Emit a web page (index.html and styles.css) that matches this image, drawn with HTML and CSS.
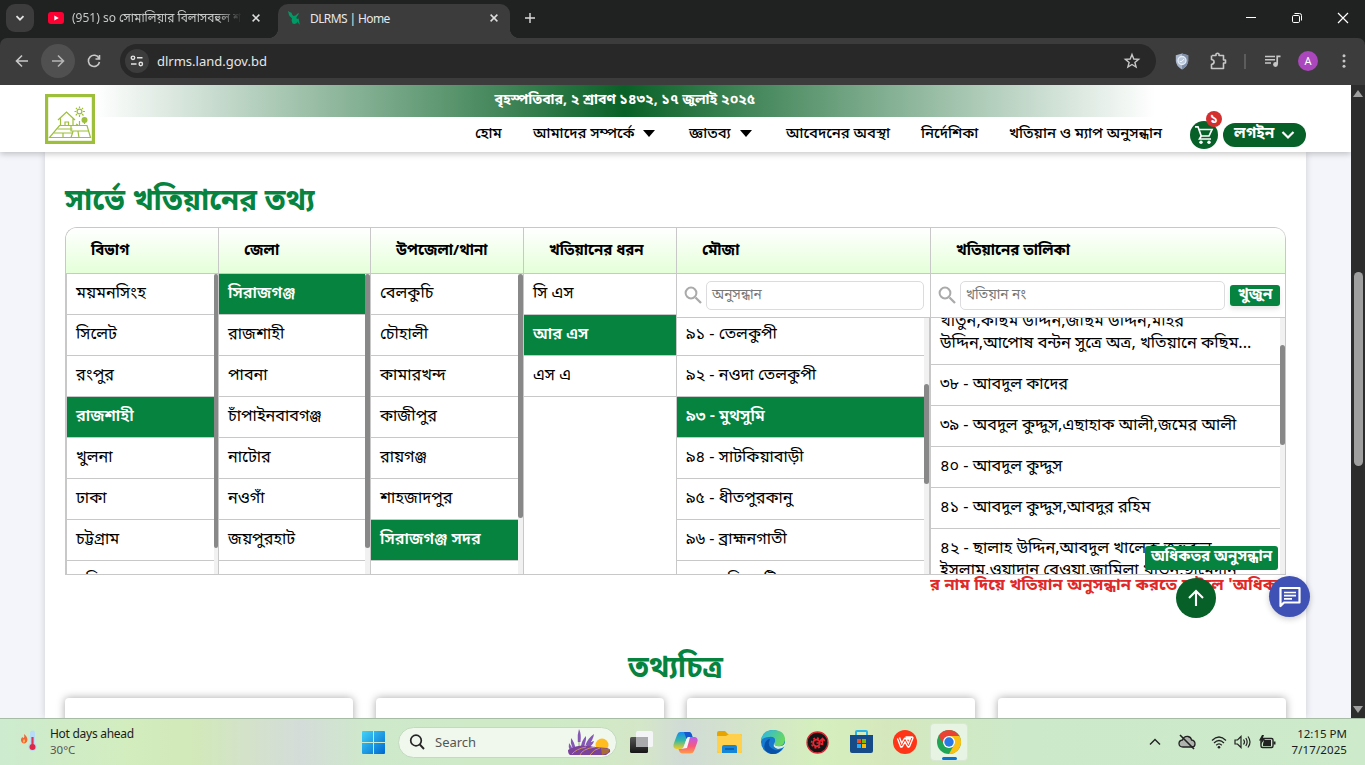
FILE: index.html
```html
<!DOCTYPE html>
<html lang="bn">
<head>
<meta charset="utf-8">
<title>DLRMS | Home</title>
<link rel="stylesheet" href="styles.css">
</head>
<body>
<div class="window">
  <div class="tabstrip">
    <div class="tab-search"><svg width="12" height="12" viewBox="0 0 12 12"><path d="M2.500 4.200 6 7.700 9.500 4.200" fill="none" stroke="#e3e3e3" stroke-width="1.800"/></svg></div>
    <div class="tab tab-back">
      <svg width="16" height="12" viewBox="0 0 16 12"><rect width="16" height="12" rx="3" fill="#ff0033"/><path d="M6.300 3.400 10.800 6 6.300 8.600z" fill="#fff"/></svg>
      <span class="tab-title faded">(951) so সোমালিয়ার বিলাসবহুল শ</span>
      <svg class="tab-x" width="8" height="8" viewBox="0 0 8 8"><path d="M.6.600 7.400 7.400M7.400.600.600 7.400" stroke="#dedede" stroke-width="1.500"/></svg>
    </div>
    <div class="tab tab-active">
      <svg width="14" height="14" viewBox="0 0 14 14"><path d="M0 0 2 1.200 3.500 1.800 4.200 3.800 5.500 5 7.500 4.500 10 2.200 11 2.600 9.200 5.200 8.200 6.600 9 8 10.600 7.600 11.800 13.800 10.500 12.600 9.600 10.600 8.600 12.200 6.500 13 4.500 12.400 3.600 9.500 4 7.200 2 5.600 1 4z" fill="#009a66"/></svg>
      <span class="tab-title title-home">DLRMS | Home</span>
      <svg class="tab-x" width="8" height="8" viewBox="0 0 8 8"><path d="M.6.600 7.400 7.400M7.400.600.600 7.400" stroke="#dedede" stroke-width="1.500"/></svg>
    </div>
    <svg class="new-tab" width="12" height="12" viewBox="0 0 12 12"><path d="M6 1v10M1 6h10" stroke="#dcdcdc" stroke-width="1.400"/></svg>
    <div class="win-controls">
      <svg width="10" height="10" viewBox="0 0 10 10"><path d="M0 4.500h10" stroke="#fff"/></svg>
      <svg width="10" height="10" viewBox="0 0 10 10"><rect x=".5" y="2.500" width="7" height="7" rx="1.200" fill="none" stroke="#fff"/><path d="M2.500.5H7.500Q9.500.5 9.500 2.500V7.500" fill="none" stroke="#fff"/></svg>
      <svg width="10" height="10" viewBox="0 0 10 10"><path d="M0 0 10 10M10 0 0 10" stroke="#fff" stroke-width="1.200"/></svg>
    </div>
  </div>
  <div class="toolbar">
    <div class="tb-btn"><svg width="14" height="14" viewBox="0 0 14 14"><path d="M13 7H2M7 1.500 1.500 7 7 12.500" fill="none" stroke="#c7c7c7" stroke-width="1.600"/></svg></div>
    <div class="tb-btn tb-hover"><svg width="14" height="14" viewBox="0 0 14 14"><path d="M1 7H12M7 1.500 12.500 7 7 12.500" fill="none" stroke="#b5b5b5" stroke-width="1.600"/></svg></div>
    <div class="tb-btn"><svg width="14" height="14" viewBox="0 0 14 14"><path d="M12 4.300A5.600 5.600 0 1 0 12.500 8M12.500 1V5H8.500" fill="none" stroke="#c7c7c7" stroke-width="1.600"/></svg></div>
    <div class="omnibox">
      <div class="site-info"><svg width="14" height="12" viewBox="0 0 14 12"><g fill="none" stroke="#e3e3e3" stroke-width="1.400"><circle cx="3" cy="2.800" r="1.700"/><path d="M7 2.800H12.500M1 9H6.500"/><circle cx="10.800" cy="9" r="1.700"/></g></svg></div>
      <span class="url">dlrms.land.gov.bd</span>
      <svg class="star" width="16" height="16" viewBox="0 0 16 16"><path d="M8 1.500 9.800 6 14.600 6.300 10.900 9.400 12.100 14 8 11.500 3.900 14 5.100 9.400 1.400 6.300 6.200 6z" fill="none" stroke="#c7c7c7" stroke-width="1.400"/></svg>
    </div>
    <div class="tb-right">
      <svg width="14" height="17" viewBox="0 0 14 17"><path d="M7 .5 13.200 2.300V8Q13 13 7 16.500 1 13 .8 8V2.300z" fill="#a9b5ca"/><path d="M7 .5V16.500Q13 13 13.200 8V2.300z" fill="#7f8ea8"/><circle cx="7" cy="7.500" r="4" fill="#b9c8db" stroke="#e4ecf5" stroke-width="1.400"/><path d="M4.800 8.500Q7 9.500 9 6" fill="none" stroke="#f4f8fc"/></svg>
      <svg width="17" height="18" viewBox="0 0 17 18"><path d="M2 3.500H6V2Q7.500.5 9 2V3.500H13.500V8H15.500V11H13.500V16.500H1.500V12.500Q4.500 11.500 4 9.600 4 8 1.500 7.500V3.500" fill="none" stroke="#c7c7c7" stroke-width="1.600" stroke-linejoin="round"/></svg>
      <i class="tb-sep"></i>
      <svg width="16" height="14" viewBox="0 0 16 14"><path d="M0 2.500H10M0 5.800H10M0 9H6" stroke="#c7c7c7" stroke-width="1.500"/><path d="M12.200 10V2.300H15.500" fill="none" stroke="#c7c7c7" stroke-width="1.700"/><circle cx="10.500" cy="10.500" r="2.400" fill="#c7c7c7"/></svg>
      <span class="avatar">A</span>
      <svg width="4" height="14" viewBox="0 0 4 14"><g fill="#c7c7c7"><circle cx="2" cy="1.800" r="1.500"/><circle cx="2" cy="7" r="1.500"/><circle cx="2" cy="12.200" r="1.500"/></g></svg>
    </div>
  </div>

  <div class="viewport">
    <div class="page">
      <header class="site-header">
        <svg class="logo" width="50" height="50" viewBox="0 0 50 50"><rect x="1.600" y="1.600" width="46.800" height="46.800" fill="#fff" stroke="#9dbf3b" stroke-width="3.200"/><g fill="none" stroke="#9dbf3b" stroke-width="1.200"><path d="M13 26 21.500 18 30 26M15.500 24.500V31.500M28 24.500V31.500M20 31V28H23.500V31M14.500 31.500H42L45.500 43.500H4.500z"/><path d="M12.500 35H27.500M26 32V37H43.500M9 39H27M18 39V43.500M28 37.500 26 43.500M33 37.500 34 43.500"/><circle cx="34.500" cy="17.500" r="2.400"/><path d="M34.500 12.500V14M34.500 21V23M29.500 17.500H31.200M38 17.500H40M31 14 32 15M37 20 38.500 21.500M38 14 37 15M32 20 30.800 21.300M39.500 30V26M34.500 31V27M31 30 33 31"/></g><circle cx="39.500" cy="26" r="3" fill="#9dbf3b"/></svg>
        <div class="head-main">
          <div class="date-band"><span class="date-text">বৃহস্পতিবার, ২ শ্রাবণ ১৪৩২, ১৭ জুলাই ২০২৫</span></div>
          <nav class="nav">
            <a class="n1">হোম</a>
            <a class="n2">আমাদের সম্পর্কে<i class="tri"></i></a>
            <a class="n3">জ্ঞাতব্য<i class="tri"></i></a>
            <a class="n4">আবেদনের অবস্থা</a>
            <a class="n5">নির্দেশিকা</a>
            <a class="n6">খতিয়ান ও ম্যাপ অনুসন্ধান</a>
          </nav>
        </div>
        <div class="actions">
          <div class="cart"><svg width="20" height="20" viewBox="0 0 20 20"><path d="M1 1.800H4L7.200 11H15L18 4.500H5M7.200 11 5.500 14H17" fill="none" stroke="#fff" stroke-width="1.700"/><circle cx="7" cy="17.200" r="1.700" fill="#fff"/><circle cx="15" cy="17.200" r="1.700" fill="#fff"/></svg><span class="badge">১</span></div>
          <div class="login"><span>লগইন</span><svg width="14" height="10" viewBox="0 0 14 10"><path d="M1.500 2 7 7.500 12.500 2" fill="none" stroke="#fff" stroke-width="2.200"/></svg></div>
        </div>
      </header>

      <main class="panel">
        <h2 class="title">সার্ভে খতিয়ানের তথ্য</h2>
        <div class="survey">
          <section class="col">
            <div class="col-head">বিভাগ</div>
            <div class="col-body inset"><div class="list">
              <div class="row">ময়মনসিংহ</div><div class="row">সিলেট</div><div class="row">রংপুর</div><div class="row on">রাজশাহী</div><div class="row">খুলনা</div><div class="row">ঢাকা</div><div class="row">চট্টগ্রাম</div><div class="row">বরিশাল</div>
            </div><div class="rail slim"><i class="thumb t-long"></i></div></div>
          </section>
          <section class="col">
            <div class="col-head">জেলা</div>
            <div class="col-body"><div class="list">
              <div class="row on">সিরাজগঞ্জ</div><div class="row">রাজশাহী</div><div class="row">পাবনা</div><div class="row">চাঁপাইনবাবগঞ্জ</div><div class="row">নাটোর</div><div class="row">নওগাঁ</div><div class="row">জয়পুরহাট</div><div class="row"></div>
            </div><div class="rail"><i class="thumb t-long"></i></div></div>
          </section>
          <section class="col">
            <div class="col-head">উপজেলা/থানা</div>
            <div class="col-body"><div class="list">
              <div class="row">বেলকুচি</div><div class="row">চৌহালী</div><div class="row">কামারখন্দ</div><div class="row">কাজীপুর</div><div class="row">রায়গঞ্জ</div><div class="row">শাহজাদপুর</div><div class="row on">সিরাজগঞ্জ সদর</div><div class="row"></div>
            </div><div class="rail"><i class="thumb t-mid"></i></div></div>
          </section>
          <section class="col">
            <div class="col-head">খতিয়ানের ধরন</div>
            <div class="col-body"><div class="list">
              <div class="row">সি এস</div><div class="row on">আর এস</div><div class="row">এস এ</div>
            </div></div>
          </section>
          <section class="col">
            <div class="col-head">মৌজা</div>
            <div class="finder"><svg class="mag" width="19" height="19" viewBox="0 0 19 19"><circle cx="7" cy="7" r="5.400" fill="none" stroke="#aaa" stroke-width="2"/><path d="M11.500 11.500 17 17" stroke="#aaa" stroke-width="2.300"/></svg><div class="field">অনুসন্ধান</div></div>
            <div class="col-body edge"><div class="list up3">
              <div class="row">৯১ - তেলকুপী</div><div class="row">৯২ - নওদা তেলকুপী</div><div class="row on">৯৩ - মুথসুমি</div><div class="row">৯৪ - সাটকিয়াবাড়ী</div><div class="row">৯৫ - ধীতপুরকানু</div><div class="row">৯৬ - ব্রাহ্মনগাতী</div><div class="row">৯৭ - হরিনহাটি</div>
            </div><div class="rail"><i class="thumb t-mouza"></i></div></div>
          </section>
          <section class="col">
            <div class="col-head">খতিয়ানের তালিকা</div>
            <div class="finder"><svg class="mag" width="19" height="19" viewBox="0 0 19 19"><circle cx="7" cy="7" r="5.400" fill="none" stroke="#aaa" stroke-width="2"/><path d="M11.500 11.500 17 17" stroke="#aaa" stroke-width="2.300"/></svg><div class="field">খতিয়ান নং</div><div class="go">খুজুন</div></div>
            <div class="col-body"><div class="list up17">
              <div class="row two">খাতুন,কছিম উদ্দিন,জছিম উদ্দিন,মহির<br>উদ্দিন,আপোষ বন্টন সুত্রে অত্র, খতিয়ানে কছিম...</div>
              <div class="row">৩৮ - আবদুল কাদের</div><div class="row">৩৯ - অবদুল কুদ্দুস,এছাহাক আলী,জমের আলী</div><div class="row">৪০ - আবদুল কুদ্দুস</div><div class="row">৪১ - আবদুল কুদ্দুস,আবদুর রহিম</div>
              <div class="row two last">৪২ - ছালাহ উদ্দিন,আবদুল খালেক,জহুরুল<br>ইসলাম,ওয়াদান বেওয়া,জামিলা খাতুন,ছামেদান</div>
            </div><div class="rail"><i class="thumb t-khatian"></i></div></div>
            <div class="more">অধিকতর অনুসন্ধান</div>
          </section>
        </div>
        <div class="ticker"><span>র নাম দিয়ে খতিয়ান অনুসন্ধান করতে চাইলে 'অধিকতর</span></div>
        <h3 class="subtitle">তথ্যচিত্র</h3>
        <div class="cards"><div class="card"></div><div class="card"></div><div class="card"></div><div class="card"></div></div>
      </main>
      <div class="fab top"><svg width="20" height="20" viewBox="0 0 20 20"><path d="M10 18V3M3 10 10 3 17 10" fill="none" stroke="#fff" stroke-width="2.100"/></svg></div>
      <div class="fab chat"><svg width="22" height="22" viewBox="0 0 22 22"><path d="M1.500 20V2H20.500V16.500H5z" fill="none" stroke="#fff" stroke-width="2.200" stroke-linejoin="round"/><path d="M5 6.500H17M5 9.700H17M5 12.900H13" stroke="#fff" stroke-width="1.700"/></svg></div>
    </div>
    <div class="scrollbar"><i class="arrow up"></i><i class="bar"></i><i class="arrow down"></i></div>
  </div>

  <footer class="taskbar">
    <div class="weather">
      <svg width="18" height="24" viewBox="0 0 18 24"><path d="M4 5Q9 9 6.800 13 4 16 1.500 13 0 10 2.500 8 3 9 3.500 9 4.800 8 4 5z" fill="#f2673a"/><path d="M4 10Q6 12 4 13.700 2 13 4 10z" fill="#ffc04d"/><path d="M10 4Q10 1.500 12.500 1.500 15 1.500 15 4V14Q18 17 16 20.500 12.500 24 9.200 20.500 7 17 10 14z" fill="#b8dcf5"/><path d="M12.500 8V18" stroke="#df3352" stroke-width="2.200"/><circle cx="12.500" cy="18" r="3" fill="#df2647"/></svg>
      <div class="weather-text"><span class="w1">Hot days ahead</span><span class="w2">30°C</span></div>
    </div>
    <div class="apps">
      <div class="app start"><svg width="23" height="23" viewBox="0 0 23 23"><defs><linearGradient id="win" x2="1" y2="1"><stop stop-color="#42d2f8"/><stop offset="1" stop-color="#0068cf"/></linearGradient></defs><path d="M0 1Q0 0 1 0H11V11H0zM12 0H22Q23 0 23 1V11H12zM0 12H11V23H1Q0 23 0 22zM12 12H23V22Q23 23 22 23H12z" fill="url(#win)"/></svg></div>
      <div class="search"><svg width="16" height="16" viewBox="0 0 16 16"><circle cx="7" cy="6.500" r="5.300" fill="none" stroke="#252525" stroke-width="1.700"/><path d="M10.800 10.500 15 15" stroke="#252525" stroke-width="1.900"/></svg><span class="search-label">Search</span>
        <svg class="lavender" width="43" height="26" viewBox="0 0 43 26"><circle cx="34" cy="16" r="6.500" fill="#ffbd22"/><g stroke="#7e9a5b" stroke-width=".8"><path d="M4 12 8 22M11 8 11 22M17 14 12 22M24 10 16 22"/></g><g fill="#8458b4"><path d="M11 0Q13.500 5 12.500 13H9.800Q9 6 11 0zM3 9Q6.500 13 7.500 20L4.500 19Q2 14 3 9zM1 14Q4 17 4.500 22H2Q0 18 1 14zM18 7Q18.500 12 15.500 18L13 17Q14 11 18 7zM26 5Q25.500 10 20 17L17.500 16Q20 9 26 5zM26 12Q25 16 20 19L19 17Q21 13 26 12z"/></g><path d="M0 21Q12 14 26 18L39 19Q43 20 42 23L38 26H2Q0 25 0 21z" fill="#7a429b"/><path d="M33 19 42 20 40 24 34 26z" fill="#a96c37"/><path d="M12 26Q14 20 27 18M22 26Q26 20 32 19M4 25Q8 20 18 18" fill="none" stroke="#ca8f5a"/></svg></div>
      <div class="app"><svg width="24" height="24" viewBox="0 0 24 24"><defs><linearGradient id="tv" y2="1" x2="0"><stop stop-color="#555"/><stop offset="1" stop-color="#151515"/></linearGradient></defs><rect x="1" y="7" width="18" height="16" rx="1.500" fill="url(#tv)"/><rect x="7" y="1" width="17" height="16" rx="1.500" fill="#f4f5f6"/><path d="M7 7H19V17H7z" fill="#a9aaab"/></svg></div>
      <div class="app"><svg width="25" height="23" viewBox="0 0 25 23"><defs><linearGradient id="c1" y2="1" x2="0"><stop stop-color="#168bf2"/><stop offset=".5" stop-color="#36b9a2"/><stop offset="1" stop-color="#f5cb24"/></linearGradient><linearGradient id="c2" y2="1" x2="0"><stop stop-color="#b65cf1"/><stop offset=".55" stop-color="#f8587c"/><stop offset="1" stop-color="#ff9b45"/></linearGradient></defs><path d="M7 1H16Q18.500 1 19.500 6H16Q14 6 13.500 8L11 15Q10 18 7 18H3Q-1 17 1 12L4 4Q5 1 7 1z" fill="url(#c1)"/><path d="M18 6H22Q26 7 24 12L21 20Q20 22.500 17 22.500H9Q6.500 22 5.500 18H8Q11 18 12 15L14 9Q15 6 18 6z" fill="url(#c2)"/><path d="M11 1H16Q18.500 1 19.500 6H16Q14 6 13.500 8z" fill="#1858ce"/><path d="M13.500 8 11 15Q10.500 17 9 17.700L14 17 16 10 17 6H16Q14 6 13.500 8z" fill="#f3f6f4"/></svg></div>
      <div class="app"><svg width="25" height="22" viewBox="0 0 25 22"><path d="M0 2Q0 0 2 0H8L11 3H23Q25 3 25 5V20Q25 22 23 22H2Q0 22 0 20z" fill="#e7a400"/><path d="M0 5H9L12 3H23Q25 3 25 5V20Q25 22 23 22H2Q0 22 0 20z" fill="#ffd04c"/><path d="M5 22V16Q5 14 7 14H18Q20 14 20 16V22z" fill="#1686d9"/><path d="M8 18H17" stroke="#0759a6" stroke-width="1.500"/></svg></div>
      <div class="app"><svg width="24" height="24" viewBox="0 0 24 24"><defs><linearGradient id="edge" y2=".5"><stop stop-color="#2ab5f0"/><stop offset="1" stop-color="#68d85e"/></linearGradient></defs><circle cx="12" cy="12" r="12" fill="#1479cf"/><path d="M0 11Q1 0 12 0 24 0 24 10 23 17 16 16 12 15 14 12 15 6 8 7 2 7 0 11z" fill="url(#edge)"/><path d="M9 9Q5 17 14 20 19 21 22 17 18 25 10 24 1 21 4 13 6 9 9 9z" fill="#0751a8"/><path d="M14 12Q10 17 17 19 21 19 24 16L24 13Q22 17 16 16 12 15 14 12z" fill="#d9efdc"/></svg></div>
      <div class="app"><svg width="23" height="23" viewBox="0 0 23 23"><circle cx="11.500" cy="11.500" r="10.500" fill="#151515" stroke="#da2834" stroke-width="1.300"/><g fill="none" stroke="#ef2632"><circle cx="10.500" cy="12" r="3.300" stroke-width="1.800"/><circle cx="10.500" cy="12" r="5" stroke-width="1.500" stroke-dasharray="2 1.900"/><path d="M10.500 12H13.500M16.500 8V14M14.300 9.700 16.500 7.300 18.700 9.700" stroke-width="1.500"/></g></svg></div>
      <div class="app"><svg width="23" height="24" viewBox="0 0 23 24"><path d="M6 6V2Q6 1 7 1H16Q17 1 17 2V6" fill="none" stroke="#29b1e8" stroke-width="2"/><path d="M0 5H23V21Q23 23 21 23H2Q0 23 0 21z" fill="#164b88"/><path d="M7 9H11V13H7z" fill="#f25022"/><path d="M12 9H16V13H12z" fill="#7fba00"/><path d="M7 14H11V18H7z" fill="#25aef3"/><path d="M12 14H16V18H12z" fill="#ffb900"/></svg></div>
      <div class="app"><svg width="24" height="24" viewBox="0 0 24 24"><circle cx="12" cy="12" r="12" fill="#ff3517"/><path d="M5.500 8 8.500 16 12 9.500 15.500 16 18.800 8H12.500" fill="none" stroke="#fff" stroke-width="3.600" stroke-linejoin="round"/><path d="M5.500 8 8.500 16 12 9.500 15.500 16 18.800 8" fill="none" stroke="#ff3517" stroke-width="1" stroke-linejoin="round"/></svg></div>
      <div class="app running"><svg width="24" height="24" viewBox="0 0 24 24"><circle cx="12" cy="12" r="12" fill="#20a455"/><path d="M1.600 6A12 12 0 0 1 22.400 6H12L7 14z" fill="#e94235"/><path d="M12 6H22.400A12 12 0 0 1 12 24L17.500 14z" fill="#fbc014"/><circle cx="12" cy="12" r="6" fill="#fff"/><circle cx="12" cy="12" r="4.700" fill="#2878e8"/></svg></div>
    </div>
    <div class="tray">
      <svg width="12" height="8" viewBox="0 0 12 8"><path d="M1 6.500 6 1.500 11 6.500" fill="none" stroke="#222" stroke-width="1.400"/></svg>
      <svg width="18" height="16" viewBox="0 0 18 16"><path d="M5 13Q1 13 1 9.500 1 6.500 4.500 6 6 2 10 2.500 13 3 13.500 6 17 6.500 17 10 17 13 14 13z" fill="#aeb3ad" stroke="#222" stroke-width="1.300"/><path d="M2 1 16 15" stroke="#222" stroke-width="1.600"/></svg>
      <svg width="16" height="13" viewBox="0 0 16 13"><g fill="none" stroke="#222" stroke-width="1.200"><path d="M1 4.500Q8-2.500 15 4.500M3 7Q8 2 13 7M5.200 9.200Q8 6.500 10.800 9.200"/></g><circle cx="8" cy="11.300" r="1.300" fill="#222"/></svg>
      <svg width="17" height="14" viewBox="0 0 17 14"><g fill="none" stroke="#222" stroke-width="1.200"><path d="M1 5H3.500L7 1.500V12.500L3.500 9H1zM9.500 4.500Q11.500 7 9.500 9.500M11.800 3Q14.500 7 11.800 11M14 1.500Q18 7 14 12.500"/></g></svg>
      <svg width="17" height="14" viewBox="0 0 17 14"><rect x="2" y="3.500" width="12" height="9" rx="1.500" fill="none" stroke="#222" stroke-width="1.400"/><path d="M5 5H12V11H4V9zM14.500 6.500H16.500V9.500H14.500z" fill="#222"/><path d="M3 0 0 5.500H2.500L1.500 9.500 6 4H3.500L5 0z" fill="#222"/></svg>
      <div class="clock"><span class="time">12:15 PM</span><span class="day">7/17/2025</span></div>
    </div>
  </footer>
</div>
</body>
</html>
```

FILE: styles.css
```css
* { box-sizing: border-box; }
body { margin: 0; overflow: hidden; font-family: "Noto Sans", "Noto Sans Bengali", "Open Sans", sans-serif; }
svg { display: block; flex: none; overflow: visible; }
i { display: block; flex: none; }
span, a { white-space: nowrap; }
.window { width: 1365px; height: 765px; display: flex; flex-direction: column; overflow: hidden; background: #202221; }

.tabstrip { height: 38px; flex: none; display: flex; align-items: stretch; background: #202221; }
.tab-search { width: 28px; height: 28px; margin: 4px 0 0 6px; border-radius: 9px; background: #3c3c3c; display: grid; place-items: center; }
.tab { display: flex; align-items: center; font-size: 12px; color: #c6c9c8; }
.tab-back { width: 214px; margin-left: 14px; padding-bottom: 2px; }
.tab-title { line-height: 20px; overflow: hidden; }
.faded { width: 170px; margin-left: 8px; -webkit-mask-image: linear-gradient(90deg, #000 85%, transparent); mask-image: linear-gradient(90deg, #000 85%, transparent); }
.tab-back .tab-x { margin-left: 10px; }
.tab-active { width: 232px; margin: 4px 0 0 16px; padding: 0 12px 6px 10px; background: #3c3c3c; border-radius: 10px 10px 0 0; color: #e8e8e8; position: relative; }
.tab-active::before, .tab-active::after { content: ""; position: absolute; bottom: 0; width: 10px; height: 10px; }
.tab-active::before { left: -10px; background: radial-gradient(circle at 0 0, transparent 10px, #3c3c3c 10.500px); }
.tab-active::after { right: -10px; background: radial-gradient(circle at 100% 0, transparent 10px, #3c3c3c 10.500px); }
.title-home { flex: 1; margin-left: 8px; padding-top: 2px; letter-spacing: -.6px; }
.new-tab { margin: 12px 0 0 14px; }
.win-controls { margin: 13px 17px 0 auto; display: flex; gap: 36px; }

.toolbar { height: 47px; flex: none; background: #3c3c3c; border-radius: 7px 7px 0 0; display: flex; align-items: center; padding: 0 18px 1px 5px; }
.tb-btn { width: 34px; height: 34px; flex: none; margin-right: 2px; border-radius: 50%; display: grid; place-items: center; }
.tb-hover { background: #505050; }
.omnibox { width: 1036px; height: 34px; margin-left: 7px; flex: none; border-radius: 17px; background: #282828; display: flex; align-items: center; padding: 0 16px 0 5px; }
.site-info { width: 24px; height: 24px; border-radius: 50%; background: #3c3c3c; display: grid; place-items: center; }
.url { flex: 1; margin-left: 8px; font-size: 13px; line-height: 20px; color: #e6e6e6; }
.tb-right { margin-left: 19px; flex: 1; display: flex; align-items: center; }
.tb-right svg:nth-child(2) { margin-left: 21px; }
.tb-sep { width: 2px; height: 15px; margin: 0 19px 0 17px; background: #5c5c5c; }
.avatar { width: 20px; height: 20px; margin: 0 24px 0 17px; border-radius: 50%; background: #ab47bc; color: #fff; font-size: 11px; line-height: 20px; text-align: center; flex: none; }

.viewport { height: 633px; flex: none; display: flex; }
.page { width: 1351px; display: flex; flex-direction: column; background: #f3f5fa; position: relative; overflow: hidden; }
.site-header { height: 67px; flex: none; display: flex; background: #fff; box-shadow: 0 2px 6px rgba(0,0,0,.22); z-index: 2; }
.logo { margin: 9px 0 0 45px; }
.head-main { width: 1060px; flex: none; }
.date-band { height: 32px; background: linear-gradient(90deg, #fff 0, #096127 50%, #fff 100%); text-align: center; color: #fff; }
.date-text { font-size: 14.100px; font-weight: 700; line-height: 28px; }
.nav { display: flex; padding-left: 380px; height: 35px; font-size: 14.900px; font-weight: 500; line-height: 30px; color: #000; }
.nav a { display: flex; align-items: center; height: 30px; flex: none; }
.n1 { width: 58px; } .n2 { width: 156px; } .n3 { width: 97px; } .n4 { width: 135px; } .n5 { width: 89px; }
.nav .n6 { margin-left: -1px; }
.tri { border: 6px solid transparent; border-top: 7px solid #000; border-bottom: 0; margin: 2px 0 0 8px; }
.n3 .tri { margin-left: 9px; }
.actions { display: flex; gap: 5px; margin: 36px 0 0 35px; align-items: flex-start; }
.cart { width: 28px; height: 28px; border-radius: 50%; background: #066027; display: grid; place-items: center; position: relative; }
.badge { position: absolute; left: 16px; top: -10px; width: 16px; height: 16px; border-radius: 50%; background: #d32f2f; color: #fff; font-size: 13px; font-weight: 700; line-height: 14px; text-align: center; }
.login { width: 83px; height: 24px; margin-top: 2px; border-radius: 12px; background: #066027; color: #fff; display: flex; align-items: center; justify-content: space-between; padding: 0 11px; font-size: 15.400px; font-weight: 700; }
.login span { line-height: 20px; padding-bottom: 4px; }

.panel { width: 1261px; height: 566px; margin-left: 45px; padding: 0 20px; background: #fff; box-shadow: 0 0 7px rgba(0,0,0,.16); }
.title { height: 75px; margin: 0; padding-top: 28px; font-size: 29.500px; font-weight: 700; line-height: 38px; color: #06843f; }
.survey { width: 1221px; height: 348px; display: grid; grid-template-columns: 153px 152px 153px 153px 254px 355px; border: 1px solid #c8c8c8; border-right: 0; border-radius: 12px 12px 0 0; overflow: hidden; }
.col { border-right: 1px solid #c8c8c8; display: flex; flex-direction: column; min-height: 0; position: relative; }
.col:last-child { border-radius: 0 11px 0 0; }
.col:last-child .col-head { border-radius: 0 10px 0 0; }
.col-head { height: 46px; flex: none; border-bottom: 1px solid #c8c8c8; background: linear-gradient(#fff, #e5ffd9); padding-left: 25px; font-size: 15px; font-weight: 700; line-height: 42px; color: #000; white-space: nowrap; }
.col-body { flex: 1; min-height: 0; display: flex; overflow: hidden; }
.inset { border-left: 1px solid #c8c8c8; }
.edge { border-right: 1px solid #c8c8c8; }
.list { flex: 1; min-width: 0; }
.row { height: 41px; border-bottom: 1px solid #c8c8c8; padding-left: 9px; font-size: 16.200px; line-height: 36px; color: #000; white-space: nowrap; }
.on { background: #06843f; color: #fff; font-weight: 600; }
.rail { width: 5px; flex: none; background: #f1f1f1; }
.slim { width: 4px; }
.slim .thumb { width: 4px; }
.thumb { width: 5px; background: #888; border-radius: 3px; }
.t-long { height: 274px; } .t-mid { height: 244px; }
.t-mouza { height: 100px; margin-top: 66px; } .t-khatian { height: 100px; margin-top: 27px; }
.up3 { margin-top: -3px; } .up17 { margin-top: -17px; }
.two { height: 64px; padding-top: 8px; font-size: 16.300px; line-height: 22px; }
.last { padding-top: 7px; }
.finder { height: 44px; flex: none; display: flex; align-items: center; border-bottom: 1px solid #c8c8c8; padding: 0 6px 0 8px; }
.col:last-child .finder { padding-right: 5px; }
.mag { margin: 0 3px 0 -1px; }
.field { flex: 1; height: 29px; border: 1px solid #dcdcdf; border-radius: 5px; padding-left: 5px; font-size: 13.600px; line-height: 24px; color: #777; }
.go { width: 50px; height: 21px; margin-left: 5px; border-radius: 3px; background: #06843f; color: #fff; font-size: 15.500px; font-weight: 700; line-height: 17px; text-align: center; box-shadow: 0 3px 5px rgba(0,0,0,.1); }
.more { position: absolute; right: 7px; bottom: 4px; width: 133px; height: 24px; border-radius: 3px; background: #06843f; color: #fff; font-size: 15.100px; font-weight: 700; line-height: 19px; text-align: center; white-space: nowrap; }
.ticker { width: 356px; height: 22px; margin-left: 865px; overflow: hidden; color: #df2929; font-size: 16.400px; font-weight: 700; line-height: 17px; letter-spacing: .15px; white-space: nowrap; }
.subtitle { height: 38px; margin: 50px 0 0; font-size: 29.600px; font-weight: 700; line-height: 38px; color: #06843f; text-align: center; }
.cards { display: grid; grid-template-columns: repeat(4, 288px); justify-content: space-between; margin-top: 13px; }
.card { height: 120px; border-radius: 4px; background: #fff; box-shadow: 0 0 9px rgba(0,0,0,.35); }
.fab { position: absolute; border-radius: 50%; display: grid; place-items: center; z-index: 3; }
.top { left: 1176px; top: 493px; width: 40px; height: 40px; background: #066027; }
.chat { left: 1269px; top: 491px; width: 41px; height: 41px; background: #3f51b5; box-shadow: 0 2px 6px rgba(0,0,0,.2); }
.scrollbar { width: 14px; background: #2c2c2c; display: flex; flex-direction: column; align-items: center; padding: 5px 0; }
.bar { width: 9px; height: 194px; margin-top: 175px; border-radius: 5px; background: #9f9f9f; }
.arrow { border: 5px solid transparent; }
.up { border-top: 0; border-bottom: 7px solid #9f9f9f; }
.down { border-bottom: 0; border-top: 7px solid #9f9f9f; margin-top: auto; }

.taskbar { height: 47px; flex: none; border-top: 1px solid #a7bca5; display: flex; background: linear-gradient(90deg, #cdebcf 0, #d2edbf 9%, #d2e9b9 14%, #d4dcd9 22%, #cee9ca 27%, #ceebc6 40%, #d4e7c8 47%, #d1dbd6 50%, #d5efbd 60%, #d5e8bd 65%, #cce9ca 75%, #cdeacb 100%); color: #1b1b1b; font-size: 12px; position: relative; z-index: 4; }
.weather { width: 341px; display: flex; padding: 10px 0 0 20px; }
.weather-text { display: flex; flex-direction: column; margin: -3px 0 0 12px; line-height: 16px; }
.w1 { letter-spacing: -.28px; }
.w2 { color: #555; font-size: 11.500px; }
.apps { display: flex; align-items: center; }
.app { width: 44px; height: 46px; display: grid; place-items: center; }
.start { margin-left: 10px; }
.search { width: 219px; height: 31px; margin: 0 2px 0 3px; border-radius: 16px; background: #f0f8ed; border: 1px solid #c4dac0; display: flex; align-items: center; padding: 0 5px 0 10px; }
.search-label { flex: 1; margin-left: 10px; color: #555; font-size: 13px; }
.running { width: 38px; height: 38px; margin-left: 3px; border: 1px solid #d9e8d5; border-radius: 4px; background: #e7f3e3; position: relative; }
.running::after { content: ""; position: absolute; left: 11px; bottom: 0; width: 15px; height: 3px; border-radius: 2px; background: #0873cf; }
.tray { margin-left: auto; display: flex; align-items: center; padding-right: 18px; }
.tray svg:nth-child(2) { margin-left: 17px; }
.tray svg:nth-child(3) { margin-left: 15px; }
.tray svg:nth-child(4) { margin-left: 7px; }
.tray svg:nth-child(5) { margin-left: 8px; }
.clock { width: 60px; margin-left: 11px; display: flex; flex-direction: column; align-items: flex-end; font-size: 11.500px; line-height: 16px; }
.day { letter-spacing: .1px; }
```
